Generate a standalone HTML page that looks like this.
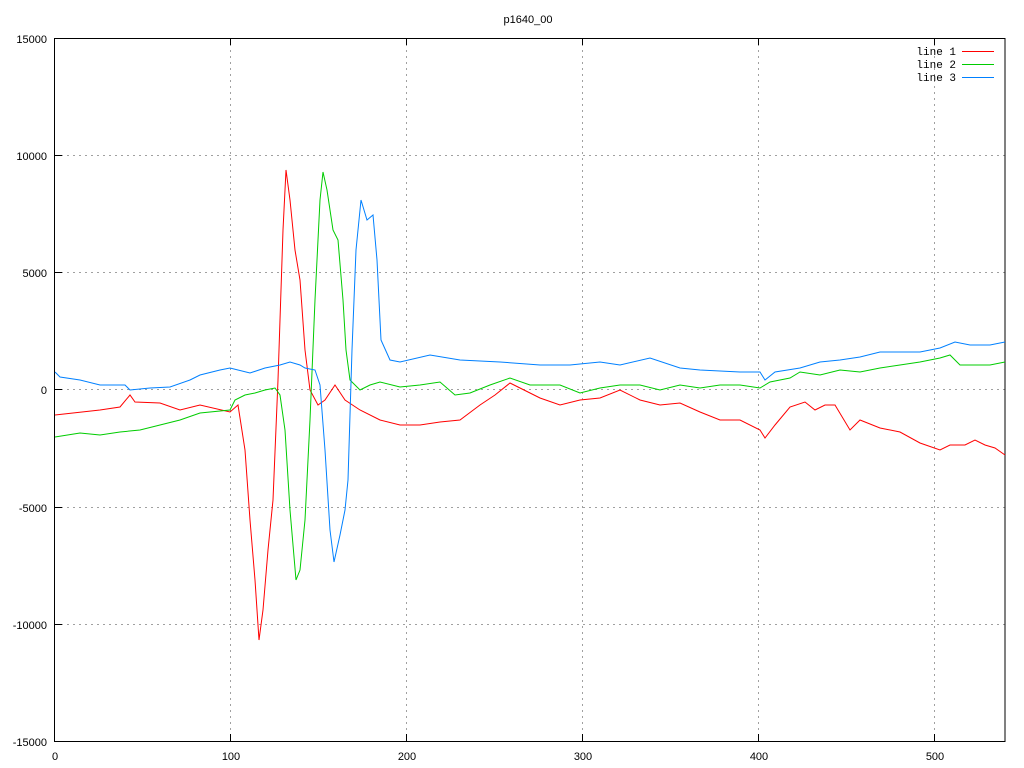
<!DOCTYPE html><html><head><style>body{margin:0;background:#fff}svg{display:block}text{font-family:"Liberation Sans",sans-serif;font-size:11px;fill:#000}</style></head><body>
<svg width="1024" height="768" viewBox="0 0 1024 768">
<g stroke="#a0a0a0" stroke-dasharray="2,4" stroke-width="1">
<line x1="55" y1="155.5" x2="1005" y2="155.5"/><line x1="55" y1="272.5" x2="1005" y2="272.5"/><line x1="55" y1="389.5" x2="1005" y2="389.5"/><line x1="55" y1="507.5" x2="1005" y2="507.5"/><line x1="55" y1="624.5" x2="1005" y2="624.5"/>
<line x1="230.5" y1="38" x2="230.5" y2="741"/><line x1="406.5" y1="38" x2="406.5" y2="741"/><line x1="582.5" y1="38" x2="582.5" y2="741"/><line x1="758.5" y1="38" x2="758.5" y2="741"/><line x1="934.5" y1="38" x2="934.5" y2="741"/>
</g>
<rect x="54.5" y="38.5" width="950.5" height="703" fill="none" stroke="#000"/>
<g stroke="#000"><line x1="55" y1="155.5" x2="62" y2="155.5"/><line x1="55" y1="272.5" x2="62" y2="272.5"/><line x1="55" y1="389.5" x2="62" y2="389.5"/><line x1="55" y1="507.5" x2="62" y2="507.5"/><line x1="55" y1="624.5" x2="62" y2="624.5"/>
<line x1="230.5" y1="741" x2="230.5" y2="734"/><line x1="406.5" y1="741" x2="406.5" y2="734"/><line x1="582.5" y1="741" x2="582.5" y2="734"/><line x1="758.5" y1="741" x2="758.5" y2="734"/><line x1="934.5" y1="741" x2="934.5" y2="734"/>
<line x1="230.5" y1="38" x2="230.5" y2="45"/><line x1="406.5" y1="38" x2="406.5" y2="45"/><line x1="582.5" y1="38" x2="582.5" y2="45"/><line x1="758.5" y1="38" x2="758.5" y2="45"/><line x1="934.5" y1="38" x2="934.5" y2="45"/></g>
<g text-anchor="end"><text x="47" y="43">15000</text><text x="47" y="160">10000</text><text x="47" y="277">5000</text><text x="47" y="394">0</text><text x="47" y="512">-5000</text><text x="47" y="629">-10000</text><text x="47" y="746">-15000</text></g>
<g text-anchor="middle"><text x="55" y="760">0</text><text x="231" y="760">100</text><text x="407" y="760">200</text><text x="583" y="760">300</text><text x="759" y="760">400</text><text x="935" y="760">500</text><text x="528" y="23">p1640_00</text></g>
<g font-family="Liberation Mono" text-anchor="end"><text x="956" y="55" style="font-family:'Liberation Mono',monospace">line 1</text><text x="956" y="68" style="font-family:'Liberation Mono',monospace">line 2</text><text x="956" y="81" style="font-family:'Liberation Mono',monospace">line 3</text></g>
<line x1="962" y1="51.5" x2="994" y2="51.5" stroke="#f00"/><line x1="962" y1="64.5" x2="994" y2="64.5" stroke="#0c0"/><line x1="962" y1="77.5" x2="994" y2="77.5" stroke="#0080ff"/>
<g fill="none" stroke-width="1">
<polyline stroke="#f00" points="55,415 100,410 120,407 130,395 135,402 160,403 180,410 200,405 230,412 238,405 245,450 250,520 255,580 259,640 263,610 268,550 273,500 278,380 283,230 286,170 290,200 295,250 300,280 305,350 310,390 318,405 325,400 335,385 345,400 360,410 380,420 400,425 420,425 440,422 460,420 480,405 495,395 510,383 520,388 540,398 560,405 580,400 600,398 620,390 640,400 660,405 680,403 700,412 720,420 740,420 760,430 765,438 775,425 790,407 805,402 815,410 825,405 835,405 850,430 860,420 880,428 900,432 920,443 940,450 950,445 965,445 975,440 985,445 995,448 1005,455"/>
<polyline stroke="#0c0" points="55,437 80,433 100,435 120,432 140,430 160,425 180,420 200,413 230,410 235,400 245,395 255,393 265,390 275,388 280,395 285,430 290,510 296,580 300,570 305,520 310,420 315,300 320,200 323,172 327,190 333,230 338,240 343,300 346,350 350,380 360,390 370,385 380,382 400,387 420,385 440,382 455,395 470,393 490,385 510,378 530,385 560,385 580,393 600,388 620,385 640,385 660,390 680,385 700,388 720,385 740,385 760,388 770,382 790,378 800,372 820,375 840,370 860,372 880,368 900,365 920,362 940,358 950,355 960,365 975,365 990,365 1005,362"/>
<polyline stroke="#0080ff" points="55,372 60,377 80,380 100,385 125,385 130,390 150,388 170,387 190,380 200,375 220,370 230,368 250,373 265,368 280,365 290,362 300,365 305,368 315,370 320,385 325,450 330,530 334,562 340,535 345,510 348,480 352,350 356,250 361,200 367,220 373,215 377,260 381,340 390,360 400,362 430,355 460,360 500,362 540,365 570,365 600,362 620,365 650,358 680,368 700,370 740,372 760,372 765,380 775,372 800,368 820,362 840,360 860,357 880,352 900,352 920,352 940,348 955,342 970,345 990,345 1005,342"/>
</g>
</svg></body></html>
